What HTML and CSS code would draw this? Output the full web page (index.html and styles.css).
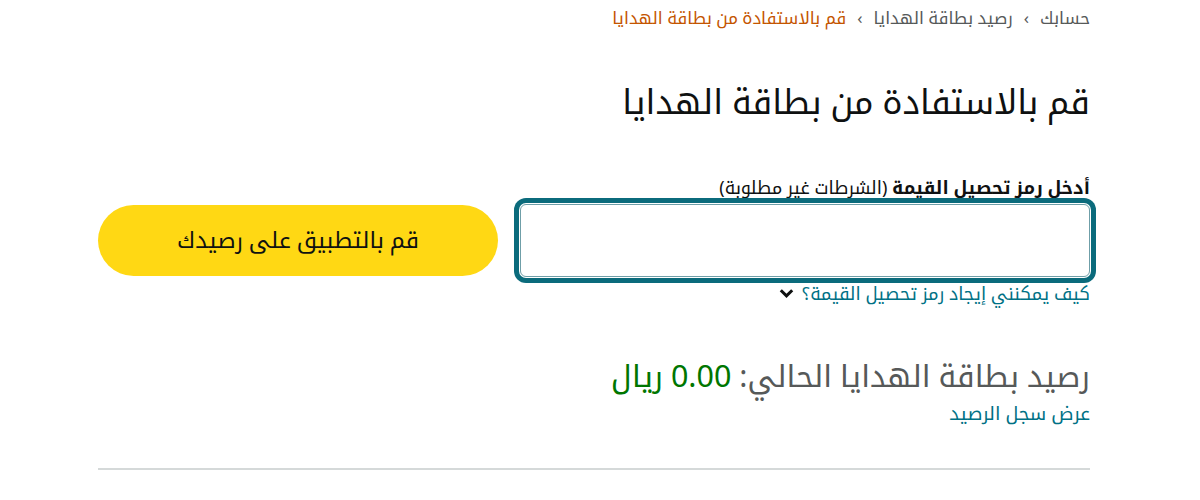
FILE: index.html
```html
<!DOCTYPE html>
<html lang="ar" dir="rtl">
<head>
<meta charset="utf-8">
<link rel="stylesheet" href="styles.css">
</head>
<body>
<div class="page">
  <nav class="crumbs">
    <a class="crumb" href="#">حسابك</a>
    <span class="sep">›</span>
    <a class="crumb" href="#">رصيد بطاقة الهدايا</a>
    <span class="sep">›</span>
    <span class="crumb current">قم بالاستفادة من بطاقة الهدايا</span>
  </nav>

  <h1 class="title">قم بالاستفادة من بطاقة الهدايا</h1>

  <div class="form">
    <div class="field">
      <label class="label"><b>أدخل رمز تحصيل القيمة</b> (الشرطات غير مطلوبة)</label>
      <input class="code-input" type="text">
      <a class="help" href="#">كيف يمكنني إيجاد رمز تحصيل القيمة؟ <svg class="chev" width="15" height="11" viewBox="0 0 15 11"><path d="M1.8 2.2 L7.5 7.9 L13.2 2.2" fill="none" stroke="#0f1111" stroke-width="3" stroke-linejoin="miter"/></svg></a>
    </div>
    <button class="apply">قم بالتطبيق على رصيدك</button>
  </div>

  <div class="balance">
    <div class="balance-line">رصيد بطاقة الهدايا الحالي: <span class="amount">0.00 ريال</span></div>
    <a class="history" href="#">عرض سجل الرصيد</a>
  </div>

  <hr class="divider">
</div>
</body>
</html>
```
FILE: styles.css
```css
html, body {
  margin: 0;
  padding: 0;
  background: #fff;
}
body {
  font-family: "Noto Sans", "Noto Kufi Arabic", sans-serif;
  color: #0f1111;
}
.page {
  width: 992px;
  margin-left: auto;
  margin-right: 110px;
  padding-top: 4px;
}
.crumbs {
  font-size: 17px;
  line-height: 28px;
  color: #565959;
  display: flex;
  align-items: center;
  gap: 11px;
}
.crumb {
  color: #565959;
  text-decoration: none;
}
.crumb.current {
  color: #c45500;
}
.sep {
  color: #565959;
  font-size: 17px;
}
.title {
  font-size: 34px;
  font-weight: 400;
  line-height: 52px;
  margin: 43px 0 0 0;
  color: #0f1111;
}
.form {
  display: flex;
  align-items: center;
  gap: 22px;
  margin-top: 48px;
}
.field {
  width: 570px;
  display: flex;
  flex-direction: column;
}
.label {
  font-size: 18px;
  line-height: 24px;
  margin-bottom: 5px;
}
.label b {
  font-weight: 700;
}
.code-input {
  box-sizing: border-box;
  width: 570px;
  height: 73px;
  border: 1px solid #6f9fa8;
  border-radius: 6px;
  box-shadow: 0 0 0 1px #fff, 0 0 0 6px #0b6b7c;
  outline: none;
  margin: 0;
}
.help {
  margin-top: 4px;
  font-size: 18px;
  line-height: 24px;
  color: #007185;
  text-decoration: none;
  display: flex;
  align-items: center;
  gap: 8px;
}
.chev {
  display: block;
}
.apply {
  width: 400px;
  height: 71px;
  border: none;
  border-radius: 36px;
  background: #ffd814;
  font-family: "Noto Sans", "Noto Kufi Arabic", sans-serif;
  font-size: 23px;
  color: #0f1111;
  padding: 0;
  cursor: pointer;
}
.balance {
  margin-top: 48px;
}
.balance-line {
  font-size: 30.5px;
  line-height: 44px;
  color: #565959;
}
.amount {
  color: #007600;
}
.history {
  display: block;
  margin-top: 3px;
  font-size: 19px;
  line-height: 26px;
  color: #007185;
  text-decoration: none;
}
.divider {
  border: none;
  border-top: 2px solid #d5d9d9;
  margin: 42px 0 0 0;
}
```
